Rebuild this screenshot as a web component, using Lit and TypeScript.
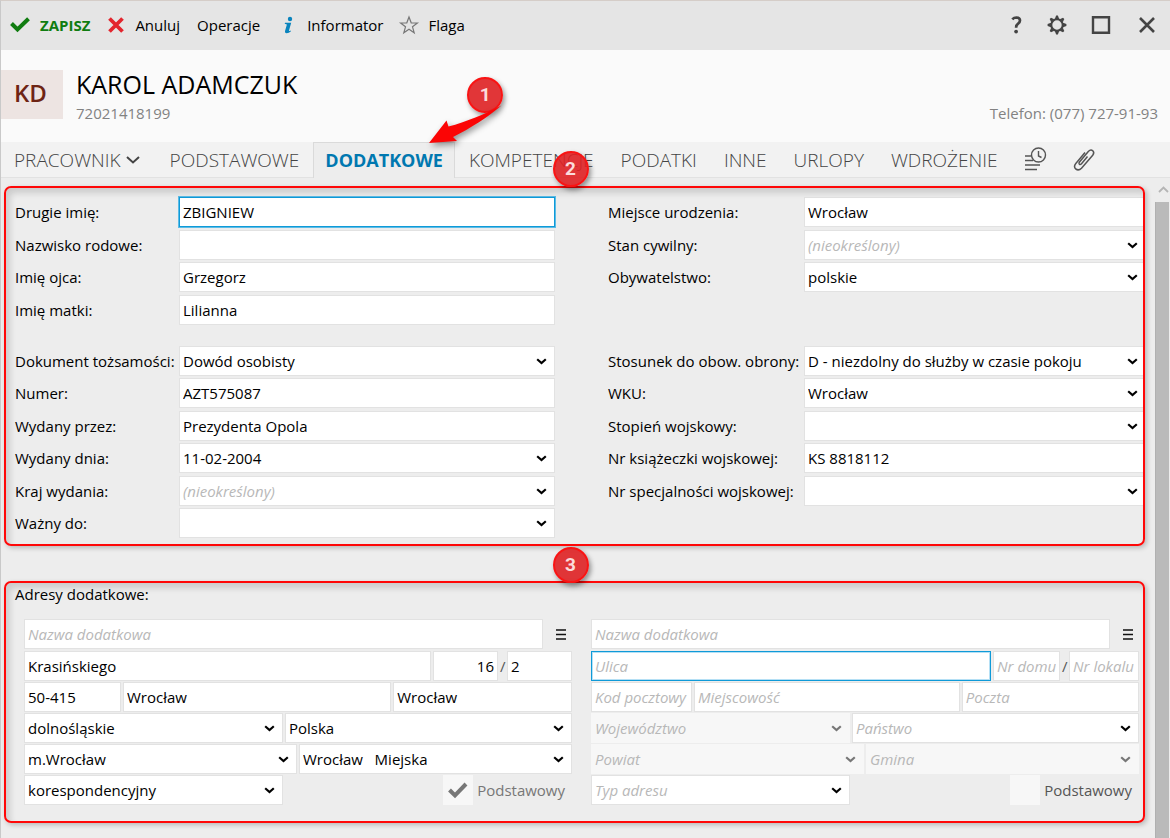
import { LitElement, html, css, svg, nothing } from "lit";
import { customElement } from "lit/decorators.js";
import { classMap } from "lit/directives/class-map.js";

type Field = {
  id: string;
  label: string;
  value?: string;
  hint?: string;
  select?: boolean;
  disabled?: boolean;
  focused?: boolean;
  right?: boolean;
};

const chevron = svg`<path d="M1.2 2.2 5.5 6 9.8 2.2" fill="none" stroke="currentColor" stroke-width="2.2"/>`;

function control(f: Field) {
  const classes = classMap({
    box: true,
    focused: !!f.focused,
    right: !!f.right,
    hint: !!f.select && !f.value,
  });
  if (!f.select) {
    return html`<input
      class=${classes}
      id=${f.id}
      type="text"
      aria-label=${f.label}
      .value=${f.value ?? ""}
      placeholder=${f.hint ?? ""}
    />`;
  }
  return html`<span class="picker">
    <select class=${classes} id=${f.id} aria-label=${f.label} ?disabled=${f.disabled}>
      <option>${f.value ?? f.hint ?? ""}</option>
    </select>
    <svg class="chevron" width="11" height="8" viewBox="0 0 11 8" aria-hidden="true">${chevron}</svg>
  </span>`;
}

const personLeft: Field[] = [
  { id: "second-name", label: "Drugie imię:", value: "ZBIGNIEW", focused: true },
  { id: "family-name", label: "Nazwisko rodowe:" },
  { id: "father", label: "Imię ojca:", value: "Grzegorz" },
  { id: "mother", label: "Imię matki:", value: "Lilianna" },
];
const personRight: Field[] = [
  { id: "birthplace", label: "Miejsce urodzenia:", value: "Wrocław" },
  { id: "marital", label: "Stan cywilny:", hint: "(nieokreślony)", select: true },
  { id: "citizenship", label: "Obywatelstwo:", value: "polskie", select: true },
];
const documentLeft: Field[] = [
  { id: "doc-type", label: "Dokument tożsamości:", value: "Dowód osobisty", select: true },
  { id: "doc-number", label: "Numer:", value: "AZT575087" },
  { id: "doc-issuer", label: "Wydany przez:", value: "Prezydenta Opola" },
  { id: "doc-date", label: "Wydany dnia:", value: "11-02-2004", select: true },
  { id: "doc-country", label: "Kraj wydania:", hint: "(nieokreślony)", select: true },
  { id: "doc-valid", label: "Ważny do:", select: true },
];
const documentRight: Field[] = [
  { id: "defence", label: "Stosunek do obow. obrony:", value: "D - niezdolny do służby w czasie pokoju", select: true },
  { id: "wku", label: "WKU:", value: "Wrocław", select: true },
  { id: "rank", label: "Stopień wojskowy:", select: true },
  { id: "book", label: "Nr książeczki wojskowej:", value: "KS 8818112" },
  { id: "speciality", label: "Nr specjalności wojskowej:", select: true },
];

type Address = {
  key: string;
  blank: boolean;
  values: (string | undefined)[];
};
const addresses: Address[] = [
  {
    key: "a",
    blank: false,
    values: [undefined, "Krasińskiego", "16", "2", "50-415", "Wrocław", "Wrocław", "dolnośląskie", "Polska", "m.Wrocław", "Wrocław\u00a0\u00a0\u00a0Miejska", "korespondencyjny"],
  },
  { key: "b", blank: true, values: [] },
];

@customElement("app-root")
export class AppRoot extends LitElement {
  static styles = css`
    :host {
      display: flex;
      flex-direction: column;
      min-height: 100vh;
      box-sizing: border-box;
      border-top: 1px solid #d5cdc8;
      border-left: 1px solid #c9c9c9;
      background: #ededed;
      color: #000;
      font: 15px/20px "Open Sans", "Noto Sans", sans-serif;
    }
    * { box-sizing: border-box; }
    button {
      border: 0;
      padding: 0;
      background: none;
      color: inherit;
      font: inherit;
      display: flex;
      align-items: center;
    }
    svg { display: block; flex: none; overflow: visible; }

    .toolbar {
      display: flex;
      align-items: center;
      gap: 17px;
      height: 49px;
      padding: 0 13px 2px 9px;
      background: #e5e5e5;
    }
    .toolbar button { gap: 10px; }
    .toolbar .save { color: #107c10; font-weight: 700; }
    .window { display: flex; align-items: center; gap: 24px; margin-left: auto; color: #444; }

    .header {
      display: flex;
      align-items: center;
      height: 92px;
      padding-right: 12px;
      background: #fafafa;
    }
    .avatar {
      width: 62px;
      height: 49px;
      display: flex;
      align-items: center;
      justify-content: center;
      padding: 0 3px 3px 0;
      background: #ede4e2;
      color: #6e2414;
      font-size: 24px;
      font-weight: 600;
      margin-bottom: 4px;
    }
    .who { flex: 1; padding-left: 13px; }
    .name { margin: 0; font-size: 25px; line-height: 34px; font-weight: 400; }
    .meta { display: flex; justify-content: space-between; line-height: 24px; color: #828282; }

    .tabs {
      display: flex;
      gap: 1px;
      height: 36px;
      background: #f2f2f2;
      border-bottom: 1px solid #e2e2e2;
      color: #444;
      font-size: 19px;
      font-weight: 300;
    }
    .tab { position: relative; padding: 0 13px; color: inherit; text-decoration: none; display: flex; align-items: center; gap: 5px; }
    .tab.menu { padding-right: 16px; }
    .tab.active {
      margin-bottom: -1px;
      background: #ededed;
      border: 1px solid #dadada;
      border-bottom: 0;
      padding: 0 11px 2px;
      color: #0078b0;
      font-size: 18px;
      font-weight: 700;
    }

    .body { display: flex; flex: 1; }
    main { flex: 1; min-width: 0; padding: 8px 10px 15px 3px; }
    .scroll { width: 15px; display: flex; flex-direction: column; }
    .scroll svg { margin: 8px 0 9px 3px; }
    .thumb { flex: 1; width: 14px; background: #bababa; border-left: 1px solid #b0b0b0; }

    section { position: relative; }
    section::after {
      content: "";
      position: absolute;
      inset: 0;
      border: 2px solid #ff0808;
      border-radius: 7px;
      box-shadow: 2px 2px 5px rgba(0, 0, 0, 0.22), inset 4px 5px 6px rgba(0, 0, 0, 0.14);
      pointer-events: none;
    }
    .details {
      display: grid;
      grid-template-columns: minmax(0, 540fr) minmax(0, 537fr);
      column-gap: 53px;
      padding: 11px 0 6px 11px;
    }
    .person, .document { display: grid; grid-template-columns: 164px minmax(0, 1fr); }
    .aside { grid-template-columns: 196px minmax(0, 1fr); }
    .person { grid-template-rows: 33px 32px 33px 32px; padding-bottom: 19px; }
    .document { grid-template-rows: 32px 33px 32px 33px 32px 32px; }
    .pair { display: contents; }
    .pair label { line-height: 31px; white-space: nowrap; }
    .aside .chevron { margin-right: 7px; }

    .box {
      display: block;
      width: 100%;
      min-width: 0;
      height: 30px;
      margin: 0;
      padding: 0 3px;
      border: 1px solid #e2e2e2;
      border-radius: 0;
      background: #fff;
      color: #000;
      font: inherit;
      outline: 0;
      appearance: none;
      opacity: 1;
    }
    .box.focused { border-color: #0f9ad8; box-shadow: 0 0 0 1px #5cbce6; }
    .blank .box.focused { box-shadow: inset 0 0 0 1px #b5e0f5; }
    .box.right { text-align: right; }
    .box.hint, .box::placeholder { color: #b8b8b8; font-style: italic; opacity: 1; }
    .box:disabled { background: #f7f7f7; border-color: #f7f7f7; }
    .picker { display: grid; min-width: 0; height: 30px; align-items: center; }
    .picker > * { grid-area: 1 / 1; }
    .chevron { justify-self: end; margin-right: 8px; pointer-events: none; }
    .box:disabled + .chevron { color: #777; }

    .addresses { margin-top: 35px; padding: 3px 6px 18px 11px; }
    .addresses h2 { margin: 0 0 15px; font: inherit; }
    .pairs { display: grid; grid-template-columns: 1fr 1fr; gap: 19px; padding-left: 9px; }
    .address { display: grid; gap: 1px; min-width: 0; }
    .line { display: grid; column-gap: 2px; align-items: center; height: 30px; }
    .line.title { grid-template-columns: minmax(0, 1fr) 27px; align-items: start; height: 31px; }
    .title button { justify-content: center; padding-left: 4px; height: 30px; }
    .street { grid-template-columns: minmax(0, 1fr) 65px 5px 65px; color: #555; }
    .zip { grid-template-columns: 97px minmax(0, 3fr) minmax(0, 2fr); }
    .region { grid-template-columns: minmax(0, 259fr) minmax(0, 287fr); }
    .county { grid-template-columns: minmax(0, 1fr) minmax(0, 1fr); }
    .kind { grid-template-columns: minmax(0, 259fr) minmax(0, 287fr); }
    .blank .street { grid-template-columns: minmax(0, 1fr) 67px 5px 70px; }
    .blank .zip { grid-template-columns: 101px minmax(0, 3fr) minmax(0, 2fr); }
    .primary { display: flex; align-items: center; justify-content: flex-end; gap: 4px; padding-right: 7px; color: #777; }
    .tick { display: grid; width: 30px; height: 30px; place-items: center; background: #f7f7f7; }
    .tick > * { grid-area: 1 / 1; }
    .tick input { appearance: none; width: 30px; height: 30px; margin: 0; }
    .blank .primary { color: #555; }

    .badge {
      position: absolute;
      z-index: 2;
      width: 36px;
      height: 36px;
      display: flex;
      align-items: center;
      justify-content: center;
      border: 2px solid #f91414;
      border-radius: 50%;
      background: rgba(222, 32, 34, 0.9);
      box-shadow: 2px 3px 5px rgba(0, 0, 0, 0.4);
      color: #fbdcdc;
      font: 700 19px/20px Roboto, sans-serif;
    }
    .badge.one { left: 153px; top: -66px; }
    .badge.two { left: calc(50% - 22px); top: -35px; }
    .badge.three { left: calc(50% - 22px); top: -34px; }
    .arrow { position: absolute; z-index: 3; left: 114px; top: -40px; filter: drop-shadow(2px 3px 3px rgba(0, 0, 0, 0.4)); }
  `;

  private pair(f: Field) {
    return html`<div class="pair"><label for=${f.id}>${f.label}</label>${control(f)}</div>`;
  }

  private address(a: Address) {
    const v = a.values;
    const at = (i: number, hint: string, extra: Partial<Field> = {}) =>
      control({ id: `${a.key}-${i}`, label: hint, hint, value: v[i], ...extra });
    const pick = { select: true };
    const locked = { select: true, disabled: a.blank };
    return html`<div class="address ${a.blank ? "blank" : ""}">
      <div class="line title">
        ${at(0, "Nazwa dodatkowa")}
        <button aria-label="Menu adresu">
          <svg width="10" height="11" viewBox="0 0 10 11"><path d="M0 1h10M0 5.5h10M0 10h10" stroke="#111" stroke-width="1.6" /></svg>
        </button>
      </div>
      <div class="line street">
        ${at(1, "Ulica", { focused: a.blank })} ${at(2, "Nr domu", { right: !a.blank })}<span>/</span>${at(3, "Nr lokalu")}
      </div>
      <div class="line zip">${at(4, "Kod pocztowy")} ${at(5, "Miejscowość")} ${at(6, "Poczta")}</div>
      <div class="line region">${at(7, "Województwo", locked)} ${at(8, "Państwo", pick)}</div>
      <div class="line county">${at(9, "Powiat", locked)} ${at(10, "Gmina", locked)}</div>
      <div class="line kind">
        ${at(11, "Typ adresu", pick)}
        <label class="primary">
          <span class="tick">
            <input type="checkbox" .checked=${!a.blank} disabled />
            ${a.blank
              ? nothing
              : html`<svg width="20" height="16" viewBox="0 0 20 16"><path d="M1.5 8 7 13.500 18 2" fill="none" stroke="#777" stroke-width="4" /></svg>`}
          </span>
          Podstawowy
        </label>
      </div>
    </div>`;
  }

  render() {
    const teeth = [0, 45, 90, 135, 180, 225, 270, 315];
    return html`
      <div class="toolbar">
        <button class="save">
          <svg width="20" height="15" viewBox="0 0 20 15"><path d="M1.500 6.500 7.500 12.500 18.500 1.800" fill="none" stroke="#107c10" stroke-width="4" /></svg>
          ZAPISZ
        </button>
        <button>
          <svg width="18" height="16" viewBox="0 0 18 16"><path d="M2.500 1.500 15.500 14.500M15.500 1.500 2.500 14.500" stroke="#e3262e" stroke-width="3.800" /></svg>
          Anuluj
        </button>
        <button>Operacje</button>
        <button>
          <svg width="20" height="18" viewBox="0 0 20 18">
            <circle cx="13" cy="3" r="2.200" fill="#0a84bd" />
            <path d="M8 6.800h6.200L12 14.600q0 .8 1.600-.2l.4.8Q11.900 17.200 9.600 17.200 7.500 17.100 8.100 14.800L9.900 8.400 7.700 7.800Z" fill="#0a84bd" />
          </svg>
          Informator
        </button>
        <button>
          <svg width="18" height="18" viewBox="0 0 18 18"><path d="M9 1 11.200 6.800 17.400 7 12.500 10.800 14.200 16.800 9 13.300 3.800 16.800 5.500 10.800 .6 7 6.800 6.800Z" fill="none" stroke="#777" stroke-width="1.200" /></svg>
          Flaga
        </button>
        <div class="window">
          <button aria-label="Pomoc">
            <svg width="12" height="18" viewBox="0 0 12 18"><path d="M1.300 3.400Q3 1.500 5.500 1.500 9 1.600 9 4.600 9 6.300 7.100 7.700 5.100 9.100 5.100 11.700" fill="none" stroke="#444" stroke-width="2.700" /><circle cx="5.100" cy="15.600" r="1.900" fill="#444" /></svg>
          </button>
          <button aria-label="Ustawienia">
            <svg width="20" height="20" viewBox="-10 -10 20 20">
              <circle r="5.700" fill="none" stroke="#444" stroke-width="2" />
              ${teeth.map((a) => svg`<path d="M-2.200-6-.9-9.400H.9L2.200-6Z" fill="#444" transform="rotate(${a})" />`)}
            </svg>
          </button>
          <button aria-label="Maksymalizuj">
            <svg width="20" height="18" viewBox="0 0 20 18"><path d="M2 1.200H18V16.800H2Z" fill="none" stroke="#444" stroke-width="2.400" /></svg>
          </button>
          <button aria-label="Zamknij">
            <svg width="22" height="16" viewBox="0 0 22 16"><path d="M5 1 19 15M19 1 5 15" stroke="#444" stroke-width="2.600" /></svg>
          </button>
        </div>
      </div>

      <header class="header">
        <div class="avatar">KD</div>
        <div class="who">
          <h1 class="name">KAROL ADAMCZUK</h1>
          <div class="meta"><span>72021418199</span><span>Telefon: (077) 727-91-93</span></div>
        </div>
      </header>

      <nav class="tabs">
        <a class="tab menu" href="#pracownik">PRACOWNIK
          <svg width="14" height="8" viewBox="0 0 14 8"><path d="M1 1 7 6.500 13 1" fill="none" stroke="#444" stroke-width="2" /></svg>
        </a>
        <a class="tab" href="#podstawowe">PODSTAWOWE</a>
        <a class="tab active" href="#dodatkowe">DODATKOWE
          <span class="badge one">1</span>
          <svg class="arrow" width="76" height="42" viewBox="0 0 76 42"><path d="M1 40 18.500 17.500 20.500 23.500C38 19 57 11 73.500 2.500 60 14 43 25 25 34L29 38Z" fill="#fb0505" /></svg>
        </a>
        <a class="tab" href="#kompetencje">KOMPETENCJE</a>
        <a class="tab" href="#podatki">PODATKI</a>
        <a class="tab" href="#inne">INNE</a>
        <a class="tab" href="#urlopy">URLOPY</a>
        <a class="tab" href="#wdrozenie">WDROŻENIE</a>
        <a class="tab" href="#historia" aria-label="Historia">
          <svg width="22" height="24" viewBox="0 0 22 24" fill="none" stroke="#555" stroke-width="1.400">
            <circle cx="13.500" cy="7" r="7" /><path d="M13.500 3V8L16.500 9.500M0 8H6M0 12.500H8M0 17H15M0 21.500H12" />
          </svg>
        </a>
        <a class="tab" href="#zalaczniki" aria-label="Załączniki">
          <svg width="20" height="23" viewBox="0 0 20 23" fill="none" stroke="#555" stroke-width="1.500">
            <path d="M13.500 8.500 7.500 15.700Q6.300 17 5.300 16.100 4.500 15.200 5.500 14L14.300 3.500Q16.700 1 18.800 2.800 20.700 4.700 18.700 7.300L7.500 20.200Q4.500 23.200 1.700 20.900-.7 18.300 1.800 15.400L11 4.500" />
          </svg>
        </a>
      </nav>

      <div class="body">
        <main>
          <section class="details">
            <div class="person">${personLeft.map((f) => this.pair(f))}</div>
            <div class="person aside">${personRight.map((f) => this.pair(f))}</div>
            <div class="document">${documentLeft.map((f) => this.pair(f))}</div>
            <div class="document aside">${documentRight.map((f) => this.pair(f))}</div>
            <span class="badge two">2</span>
          </section>
          <section class="addresses">
            <h2>Adresy dodatkowe:</h2>
            <div class="pairs">${addresses.map((a) => this.address(a))}</div>
            <span class="badge three">3</span>
          </section>
        </main>
        <div class="scroll" aria-hidden="true">
          <svg width="11" height="7" viewBox="0 0 11 7"><path d="M1 6 5.500 1.500 10 6" fill="none" stroke="#b5b5b5" stroke-width="1.800" /></svg>
          <div class="thumb"></div>
        </div>
      </div>
    `;
  }
}
